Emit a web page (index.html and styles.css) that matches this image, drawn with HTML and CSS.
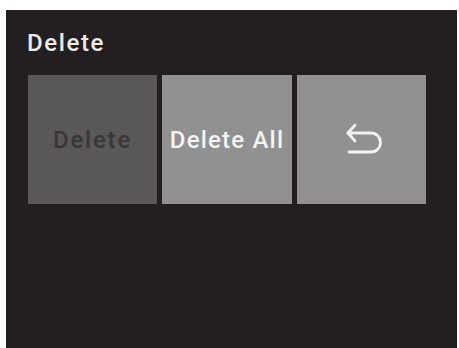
FILE: index.html
```html
<!DOCTYPE html>
<html>
<head>
<meta charset="utf-8">
<link rel="stylesheet" href="styles.css">
</head>
<body>
<div class="panel">
  <div class="title">Delete</div>
  <div class="buttons">
    <div class="btn btn-delete">Delete</div>
    <div class="btn btn-all">Delete All</div>
    <div class="btn btn-back">
      <svg class="back-icon" width="42" height="36" viewBox="0 0 42 36" fill="none" stroke="#f2f2f2" stroke-width="2.8" stroke-linecap="round" stroke-linejoin="round">
        <path d="M12 4 L5 12 L12 20"/>
        <path d="M5 12 H28 A9.5 9.5 0 0 1 28 31 H6"/>
      </svg>
    </div>
  </div>
</div>
</body>
</html>
```
FILE: styles.css
```css
html, body {
  margin: 0;
  padding: 0;
  background: #ffffff;
}
body {
  width: 459px;
  height: 348px;
  overflow: hidden;
}
.panel {
  margin: 10px 2px 0 6px;
  height: 338px;
  background: #231f20;
  padding: 19px 0 0 21px;
  box-sizing: border-box;
  font-family: Roboto, "Liberation Sans", sans-serif;
}
.title {
  font-size: 24px;
  line-height: 28px;
  font-weight: 500;
  letter-spacing: 1.6px;
  color: #ebebeb;
}
.buttons {
  margin-top: 18px;
  margin-left: 1px;
  display: flex;
  gap: 5px;
}
.btn {
  height: 129px;
  display: flex;
  align-items: center;
  justify-content: center;
  font-size: 24px;
  font-weight: 500;
  letter-spacing: 1.2px;
}
.btn-delete {
  width: 129px;
  background: #5a5758;
  color: #393637;
  letter-spacing: 1.8px;
}
.btn-all {
  width: 130px;
  background: #929192;
  color: #f4f4f4;
}
.btn-back {
  width: 129px;
  background: #939091;
}
.back-icon {
  display: block;
  margin-left: 4px;
  margin-top: -2px;
}
```
